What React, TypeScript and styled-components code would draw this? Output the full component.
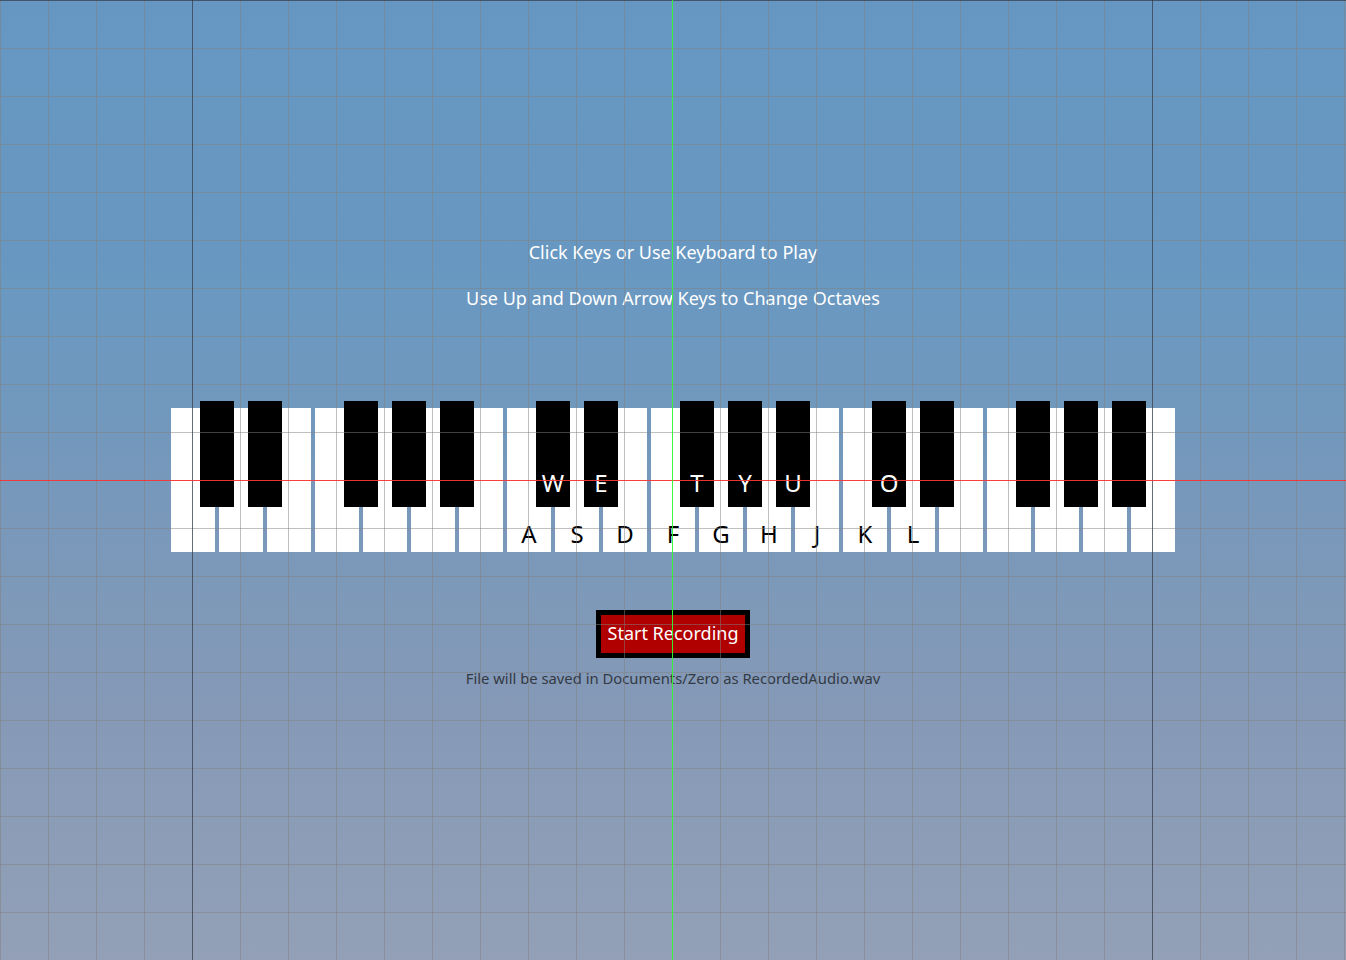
import React from "react";
import styled, { createGlobalStyle } from "styled-components";

const GlobalStyle = createGlobalStyle`
  html, body {
    margin: 0;
    padding: 0;
    overflow: hidden;
  }
  body {
    font-family: "Noto Sans", "Open Sans", sans-serif;
  }
`;

const Stage = styled.div`
  position: relative;
  width: 1346px;
  height: 960px;
  overflow: hidden;
  background: linear-gradient(
    to bottom,
    #6697c2 0%,
    #6898c1 28%,
    #7698bb 50%,
    #8499b7 72%,
    #93a0b7 100%
  );
  display: flex;
  flex-direction: column;
  align-items: center;
  padding-top: 240px;
  box-sizing: border-box;
  font-family: "Noto Sans", "Open Sans", sans-serif;
`;

const Instruction = styled.div<{ $gap?: number }>`
  color: #ffffff;
  font-size: 18px;
  line-height: 24px;
  height: 24px;
  margin-top: ${(p) => p.$gap ?? 0}px;
  white-space: nowrap;
`;

const Keyboard = styled.div`
  position: relative;
  width: 1004px;
  height: 151px;
  margin-top: 91px;
`;

const WhiteRow = styled.div`
  display: flex;
  gap: 4px;
  padding-top: 7px;
`;

const WhiteKey = styled.div`
  width: 44px;
  height: 144px;
  background: #ffffff;
  display: flex;
  flex-direction: column;
  justify-content: flex-end;
  align-items: center;
  padding-bottom: 6px;
  box-sizing: border-box;
`;

const BlackKey = styled.div`
  position: absolute;
  top: 0;
  width: 34px;
  height: 106px;
  background: #000000;
  display: flex;
  flex-direction: column;
  justify-content: flex-end;
  align-items: center;
  padding-bottom: 12px;
  box-sizing: border-box;
`;

const KeyLabel = styled.span<{ $light?: boolean }>`
  font-size: 24px;
  line-height: 24px;
  height: 24px;
  color: ${(p) => (p.$light ? "#ffffff" : "#000000")};
`;

const RecordButton = styled.button`
  margin-top: 58px;
  width: 154px;
  height: 48px;
  box-sizing: border-box;
  border: 5px solid #000000;
  background: #b00000;
  color: #ffffff;
  font-family: "Noto Sans", "Open Sans", sans-serif;
  font-size: 18px;
  line-height: 24px;
  padding: 0 0 2px;
  cursor: pointer;
  display: flex;
  align-items: center;
  justify-content: center;
  white-space: nowrap;
`;

const SaveNote = styled.div`
  margin-top: 10px;
  color: #333a44;
  font-size: 14.8px;
  line-height: 20px;
  white-space: nowrap;
`;

const Overlay = styled.div`
  position: absolute;
  inset: 0;
  pointer-events: none;
  background-image: linear-gradient(
      to right,
      rgba(128, 128, 128, 0.5) 1px,
      transparent 1px
    ),
    linear-gradient(to bottom, rgba(128, 128, 128, 0.5) 1px, transparent 1px);
  background-size: 48px 48px;
`;

const Guide = styled.span<{
  $axis: "x" | "y";
  $at: number;
  $color: string;
}>`
  position: absolute;
  background: ${(p) => p.$color};
  ${(p) =>
    p.$axis === "x"
      ? `left: ${p.$at}px; top: 0; bottom: 0; width: 1px;`
      : `top: ${p.$at}px; left: 0; right: 0; height: 1px;`}
`;

const WHITE_COUNT = 21;
const BLACK_AFTER = [0, 1, 3, 4, 5];
const WHITE_LABELS: Record<number, string> = {
  7: "A",
  8: "S",
  9: "D",
  10: "F",
  11: "G",
  12: "H",
  13: "J",
  14: "K",
  15: "L",
};
const BLACK_LABELS: Record<number, string> = {
  7: "W",
  8: "E",
  10: "T",
  11: "Y",
  12: "U",
  14: "O",
};

const blackIndices: number[] = [];
for (let o = 0; o < 3; o++) {
  BLACK_AFTER.forEach((b) => blackIndices.push(o * 7 + b));
}

export default function App() {
  const viewportLine = "rgba(30, 40, 60, 0.55)";
  return (
    <>
      <GlobalStyle />
      <Stage>
        <Instruction>Click Keys or Use Keyboard to Play</Instruction>
        <Instruction $gap={22}>
          Use Up and Down Arrow Keys to Change Octaves
        </Instruction>
        <Keyboard>
          <WhiteRow>
            {Array.from({ length: WHITE_COUNT }, (_, i) => (
              <WhiteKey key={i}>
                {WHITE_LABELS[i] && <KeyLabel>{WHITE_LABELS[i]}</KeyLabel>}
              </WhiteKey>
            ))}
          </WhiteRow>
          {blackIndices.map((i) => (
            <BlackKey key={i} style={{ left: 29 + i * 48 }}>
              {BLACK_LABELS[i] && (
                <KeyLabel $light>{BLACK_LABELS[i]}</KeyLabel>
              )}
            </BlackKey>
          ))}
        </Keyboard>
        <RecordButton type="button">Start Recording</RecordButton>
        <SaveNote>File will be saved in Documents/Zero as RecordedAudio.wav</SaveNote>
        <Overlay>
          <Guide $axis="y" $at={0} $color={viewportLine} />
          <Guide $axis="x" $at={192} $color={viewportLine} />
          <Guide $axis="x" $at={1152} $color={viewportLine} />
          <Guide $axis="y" $at={480} $color="rgba(255, 48, 48, 0.9)" />
          <Guide $axis="x" $at={672} $color="rgba(48, 255, 48, 0.9)" />
        </Overlay>
      </Stage>
    </>
  );
}
